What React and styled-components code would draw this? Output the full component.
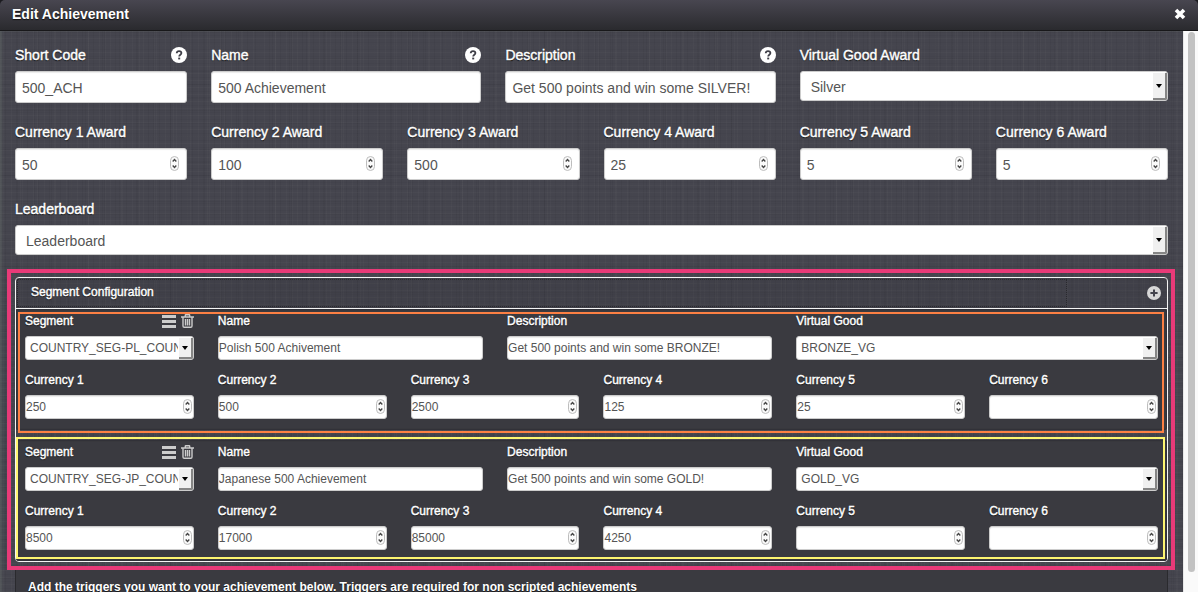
import React, { useId } from "react";
import styled, { createGlobalStyle, css } from "styled-components";

const GlobalStyle = createGlobalStyle`
  *, *::before, *::after { box-sizing: border-box; }
  html, body, #root { height: 100%; }
  body {
    margin: 0;
    overflow: hidden;
    background: #1b1b1f;
    color: #fff;
    font-family: "Liberation Sans", Arial, sans-serif;
    font-size: 14px;
  }
  button, input, select { font-family: inherit; margin: 0; }
`;

const linen = css`
  background-color: #45454e;
  background-image:
    repeating-linear-gradient(90deg, rgba(255, 255, 255, 0.02) 0 1px, transparent 1px 5px, rgba(0, 0, 0, 0.04) 5px 6px, transparent 6px 11px),
    repeating-linear-gradient(0deg, rgba(255, 255, 255, 0.02) 0 1px, transparent 1px 3px, rgba(0, 0, 0, 0.03) 3px 4px, transparent 4px 7px),
    repeating-linear-gradient(90deg, rgba(0, 0, 0, 0.04) 0 1px, transparent 1px 3px, rgba(255, 255, 255, 0.02) 3px 4px, transparent 4px 17px),
    repeating-linear-gradient(0deg, rgba(0, 0, 0, 0.04) 0 1px, transparent 1px 13px);
`;

const Dialog = styled.div`
  display: flex;
  flex-direction: column;
  height: 100vh;
  overflow: hidden;
`;

const TitleBar = styled.header`
  display: flex;
  flex: none;
  align-items: center;
  justify-content: space-between;
  height: 31px;
  padding: 0 12px 2px;
  border-bottom: 1px solid #18181a;
  border-radius: 5px 5px 0 0;
  background: linear-gradient(#484650, #2a2a2e);
`;

const Title = styled.h1`
  margin: 0;
  font-size: 14px;
  line-height: 20px;
  text-shadow: 0 1px 1px #111;
`;

const IconButton = styled.button`
  display: flex;
  padding: 0;
  border: 0;
  background: none;
  color: ${(p) => p.$color || "#fff"};
  cursor: pointer;
`;

const Viewport = styled.div`
  display: flex;
  flex: 1;
  min-height: 0;
`;

const Content = styled.main`
  ${linen}
  flex: 1;
  min-width: 0;
  overflow: hidden;
  padding: 14px 8px 0 7px;
  box-shadow: inset 2px 0 2px rgba(110, 120, 115, 0.35);
`;

const ScrollTrack = styled.div`
  flex: none;
  width: 15px;
  padding: 1px 3px 20px 4px;
  background: #fafafa;
  border-left: 1px solid #e8e8e8;
`;

const ScrollThumb = styled.div`
  height: 100%;
  border-radius: 4px;
  background: #c2c2c2;
`;

const Grid = styled.div`
  display: grid;
  grid-template-columns: repeat(12, minmax(0, 1fr));
  column-gap: 24px;
  row-gap: ${(p) => (p.$compact ? 12 : 19)}px;
  padding: ${(p) => (p.$compact ? "4px 9px 11px" : "0 7px 14px 8px")};
`;

const Field = styled.div`
  grid-column: span ${(p) => p.$span};
  min-width: 0;
`;

const LabelRow = styled.div`
  display: flex;
  align-items: center;
  justify-content: space-between;
  height: ${(p) => (p.$compact ? 16 : 20)}px;
  margin-bottom: ${(p) => (p.$compact ? 7 : 6)}px;
`;

const Label = styled.label`
  font-size: ${(p) => (p.$compact ? 12 : 14)}px;
  line-height: ${(p) => (p.$compact ? 16 : 20)}px;
  white-space: nowrap;
  -webkit-text-stroke: 0.4px #fff;
  text-shadow: 0 1px 1px #111;
`;

const Tools = styled.div`
  display: flex;
  align-items: center;
  gap: 5px;
`;

const Control = styled.div`
  position: relative;
  display: flex;
`;

const box = css`
  display: block;
  width: 100%;
  border: 1px solid #ccc;
  border-radius: 3px;
  background: #fff;
  color: #555;
  font-size: ${(p) => (p.$compact ? 12 : 14)}px;
  outline: 0;
`;

const TextBox = styled.input`
  ${box}
  height: ${(p) => (p.$compact ? 24 : 32)}px;
  padding: ${(p) => (p.$compact ? "0" : "2px 6px 0")};
  box-shadow: inset 0 1px 1px rgba(0, 0, 0, 0.08);
  appearance: textfield;
  &::-webkit-inner-spin-button { display: none; }
`;

const Spinner = styled.svg`
  position: absolute;
  top: 50%;
  right: ${(p) => (p.$compact ? 2 : 8)}px;
  margin-top: -8px;
  pointer-events: none;
`;

const SelectBox = styled.select`
  ${box}
  height: ${(p) => (p.$compact ? 24 : 30)}px;
  padding: ${(p) => (p.$compact ? "0 15px 0 4px" : "2px 15px 0 10px")};
  appearance: none;
`;

const SelectArrow = styled.span`
  position: absolute;
  top: 2px;
  right: 1px;
  bottom: 1px;
  display: flex;
  align-items: center;
  justify-content: center;
  width: 14px;
  border-right: 2px solid #858585;
  border-bottom: 2px solid #858585;
  border-radius: 0 0 2px 0;
  background: #f0f0f0;
  pointer-events: none;
`;

const Callout = styled.div`
  border: 4px solid #e83a78;
  padding: 4px 3px 4px 4px;
`;

const Accordion = styled.section`
  border: 1px solid #f4f4f4;
  border-radius: 4px;
`;

const AccordionHead = styled.div`
  display: flex;
  justify-content: space-between;
  align-items: center;
  height: 31px;
  padding: 0 6px 0 1px;
  border-bottom: 1px solid #f4f4f4;
  background: rgba(40, 40, 46, 0.15);
`;

const AccordionTitle = styled.button`
  flex: 1;
  height: 28px;
  margin-right: 80px;
  padding: 0 13px 2px;
  border: 1px dotted #29292e;
  background: none;
  color: #fff;
  font-size: 12px;
  line-height: 16px;
  text-align: left;
  -webkit-text-stroke: 0.4px #fff;
  text-shadow: 0 1px 1px #111;
`;

const SegmentList = styled.div`
  display: grid;
  row-gap: 10px;
`;

const SegmentPanel = styled.div`
  position: relative;
  border-radius: 3px;
  background: #3a3a40;
  box-shadow: inset 0 0 2px #1e1e22;
`;

const Highlight = styled.div`
  position: absolute;
  inset: ${(p) => p.$inset};
  border: 2px solid ${(p) => p.$color};
  pointer-events: none;
`;

const Triggers = styled.section`
  min-height: 60px;
  margin: 0 7px 0 8px;
  padding: 9px 12px;
  border: 1px solid #2a2a2e;
  border-top: 0;
  background: #3a3a40;
`;

const TriggerText = styled.p`
  margin: 0;
  font-size: 12px;
  font-weight: bold;
  line-height: 16px;
  text-shadow: 0 1px 1px #111;
`;

const CloseIcon = () => (
  <svg width="12" height="12" viewBox="0 0 12 12" aria-hidden="true">
    <path d="M2 2l8 8M10 2l-8 8" stroke="currentColor" strokeWidth="3.6" />
  </svg>
);

const HelpIcon = () => (
  <svg width="16" height="16" viewBox="0 0 16 16" aria-hidden="true">
    <circle cx="8" cy="8" r="8" fill="currentColor" />
    <path d="M5.7 6.2C5.8 4.8 6.7 4.1 8 4.1c1.4 0 2.4.8 2.4 2 0 1.6-2.2 1.7-2.2 3.4" fill="none" stroke="#3e3e47" strokeWidth="1.8" />
    <path d="M7.2 10.6h2v1.8h-2z" fill="#3e3e47" />
  </svg>
);

const PlusIcon = () => (
  <svg width="14" height="14" viewBox="0 0 14 14" aria-hidden="true">
    <circle cx="7" cy="7" r="7" fill="currentColor" />
    <path d="M7 3.4v7.2M3.4 7h7.2" stroke="#44444d" strokeWidth="2" />
  </svg>
);

const BarsIcon = () => (
  <svg width="14" height="13" viewBox="0 0 14 13" aria-hidden="true">
    <path d="M0 1.5h14M0 6.5h14M0 11.5h14" stroke="currentColor" strokeWidth="3" />
  </svg>
);

const TrashIcon = () => (
  <svg width="13" height="14" viewBox="0 0 13 14" aria-hidden="true">
    <path d="M4.3 2.5V1.2q0-.5.5-.5h3.4q.5 0 .5.5v1.3M0 3h13M2 3.5v8.6q0 1.2 1.2 1.2h6.6q1.2 0 1.2-1.2V3.5M4.5 5v6.5M6.5 5v6.5M8.5 5v6.5" fill="none" stroke="currentColor" strokeWidth="1.4" />
  </svg>
);

const Stepper = ({ compact }) => (
  <Spinner $compact={compact} width="9" height="15" viewBox="0 0 9 15" aria-hidden="true">
    <rect x="0.5" y="0.5" width="8" height="14" rx="4" fill="#fafafa" stroke="#bdbdbd" />
    <path d="M2.7 5.5l1.8-2 1.8 2M2.7 9.5l1.8 2 1.8-2" fill="none" stroke="#444" strokeWidth="1.3" />
  </Spinner>
);

function FormField({ label, value, span = 2, type = "text", compact, help, tools }) {
  const id = useId();
  return (
    <Field $span={span}>
      <LabelRow $compact={compact}>
        <Label htmlFor={id} $compact={compact}>{label}</Label>
        {help && <IconButton type="button" aria-label={`Help: ${label}`}><HelpIcon /></IconButton>}
        {tools && (
          <Tools>
            <IconButton type="button" aria-label="Reorder segment" $color="#ccc"><BarsIcon /></IconButton>
            <IconButton type="button" aria-label="Delete segment" $color="#ccc"><TrashIcon /></IconButton>
          </Tools>
        )}
      </LabelRow>
      <Control>
        {type === "select" ? (
          <>
            <SelectBox id={id} $compact={compact} defaultValue={value}>
              <option>{value}</option>
            </SelectBox>
            <SelectArrow>
              <svg width="6" height="4" viewBox="0 0 6 4" aria-hidden="true"><path d="M0 0h6L3 4z" fill="#000" /></svg>
            </SelectArrow>
          </>
        ) : (
          <TextBox id={id} type={type} $compact={compact} defaultValue={value} />
        )}
        {type === "number" && <Stepper compact={compact} />}
      </Control>
    </Field>
  );
}

const awards = [50, 100, 500, 25, 5, 5];

const segments = [
  {
    code: "COUNTRY_SEG-PL_COUNTRY",
    name: "Polish 500 Achivement",
    description: "Get 500 points and win some BRONZE!",
    good: "BRONZE_VG",
    currencies: [250, 500, 2500, 125, 25, ""],
    color: "#fc8044",
    inset: "3px 3px -3px 2px",
  },
  {
    code: "COUNTRY_SEG-JP_COUNTRY",
    name: "Japanese 500 Achievement",
    description: "Get 500 points and win some GOLD!",
    good: "GOLD_VG",
    currencies: [8500, 17000, 85000, 4250, "", ""],
    color: "#fdf570",
    inset: "-3px 2px 2px 0",
  },
];

function Segment({ data }) {
  return (
    <SegmentPanel>
      <Grid $compact>
        <FormField compact tools type="select" label="Segment" value={data.code} />
        <FormField compact span={3} label="Name" value={data.name} />
        <FormField compact span={3} label="Description" value={data.description} />
        <FormField compact span={4} type="select" label="Virtual Good" value={data.good} />
        {data.currencies.map((v, i) => (
          <FormField key={i} compact type="number" label={`Currency ${i + 1}`} value={v} />
        ))}
      </Grid>
      <Highlight $color={data.color} $inset={data.inset} />
    </SegmentPanel>
  );
}

export default function App() {
  return (
    <>
      <GlobalStyle />
      <Dialog role="dialog" aria-label="Edit Achievement">
        <TitleBar>
          <Title>Edit Achievement</Title>
          <IconButton type="button" aria-label="Close"><CloseIcon /></IconButton>
        </TitleBar>
        <Viewport>
          <Content>
            <Grid>
              <FormField help label="Short Code" value="500_ACH" />
              <FormField help span={3} label="Name" value="500 Achievement" />
              <FormField help span={3} label="Description" value="Get 500 points and win some SILVER!" />
              <FormField span={4} type="select" label="Virtual Good Award" value="Silver" />
              {awards.map((v, i) => (
                <FormField key={i} type="number" label={`Currency ${i + 1} Award`} value={v} />
              ))}
              <FormField span={12} type="select" label="Leaderboard" value="Leaderboard" />
            </Grid>
            <Callout>
              <Accordion>
                <AccordionHead>
                  <AccordionTitle type="button" aria-expanded="true">Segment Configuration</AccordionTitle>
                  <IconButton type="button" aria-label="Add segment" $color="#d8d8d8"><PlusIcon /></IconButton>
                </AccordionHead>
                <SegmentList>
                  {segments.map((s) => <Segment key={s.code} data={s} />)}
                </SegmentList>
              </Accordion>
            </Callout>
            <Triggers>
              <TriggerText>
                Add the triggers you want to your achievement below. Triggers are required for non scripted achievements
              </TriggerText>
            </Triggers>
          </Content>
          <ScrollTrack aria-hidden="true"><ScrollThumb /></ScrollTrack>
        </Viewport>
      </Dialog>
    </>
  );
}
